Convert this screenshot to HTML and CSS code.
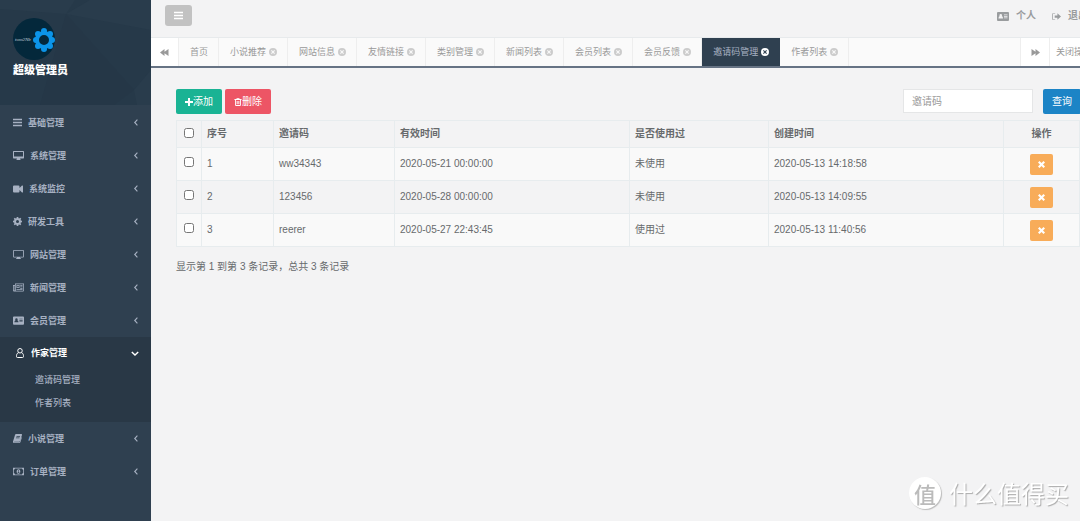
FILE: index.html
```html
<!DOCTYPE html>
<html lang="zh-CN">
<head>
<meta charset="utf-8">
<title>邀请码管理</title>
<link rel="stylesheet" href="styles.css">
</head>
<body>
<svg class="sprite" aria-hidden="true">
  <symbol id="bars" viewBox="0 0 12 12"><path d="M0 1h12v2H0zM0 5h12v2H0zM0 9h12v2H0z"/></symbol>
  <symbol id="left" viewBox="0 0 6 10"><path d="M5 1L1.2 5 5 9" fill="none" stroke="currentColor" stroke-width="1.6"/></symbol>
  <symbol id="down" viewBox="0 0 10 6"><path d="M1 1l4 3.8L9 1" fill="none" stroke="currentColor" stroke-width="1.8"/></symbol>
  <symbol id="desktop" viewBox="0 0 22 18"><path fill-rule="evenodd" d="M1 0h20l1 1v13l-1 1h-7l1 2v1H7v-1l1-2H1l-1-1V1zM2 2v9h18V2z"/></symbol>
  <symbol id="video" viewBox="0 0 20 14"><path d="M2 0h9q2 0 2 2v3l5-5h1q1 0 1 1v12q0 1-1 1h-1l-5-5v3q0 2-2 2H2q-2 0-2-2V2q0-2 2-2z"/></symbol>
  <symbol id="cog" viewBox="0 0 18 18"><path fill-rule="evenodd" d="M7.5 0h3l.5 2.4 1.4.6 2.1-1.4 2 2L15.100 5.700l.6 1.300 2.300.5v3l-2.300.5-.6 1.400 1.400 2-2 2.100-2.100-1.400-1.400.6-.5 2.300h-3L7 15.700l-1.400-.6-2 1.400-2.100-2.100 1.400-2L2.300 11 0 10.500v-3L2.300 7l.6-1.400-1.400-2 2.100-2.100 2 1.400L7 2.400zM9 6a3 3 0 1 0 0 6 3 3 0 0 0 0-6z"/></symbol>
  <symbol id="tv" viewBox="0 0 22 18"><path fill-rule="evenodd" d="M2 0h18q2 0 2 2v11q0 2-2 2h-6v1.500h2V18H6v-1.500h2V15H2q-2 0-2-2V2q0-2 2-2zM1.700 1.700v11.600h18.600V1.700z"/></symbol>
  <symbol id="news" viewBox="0 0 22 16"><path fill-rule="evenodd" d="M4 0h18v14q0 2-2 2H2q-2 0-2-2V3h4zM1.500 4.500V13q0 1 .8 1t.9-1V4.500zM5.500 1.500v12.900h14q1 0 1-1V1.500z"/><path fill-rule="evenodd" d="M7 3h6v6H7zm1.500 1.500v3h3v-3zM14.500 3h4.500v1.500h-4.500zm0 3h4.500v1.500h-4.500zm0 3h4.500v1.500h-4.500zM7 11h12v1.500H7z"/></symbol>
  <symbol id="card" viewBox="0 0 24 18"><path fill-rule="evenodd" d="M2 0h20q2 0 2 2v14q0 2-2 2H2q-2 0-2-2V2q0-2 2-2zm5.500 4a2.500 2.500 0 0 0-2 4.200Q3 9 3 13h9q0-4-2.500-4.800A2.500 2.500 0 0 0 7.500 4zM14 5v1.500h7V5zm0 3v1.500h7V8zm0 3v1.500h7V11z"/></symbol>
  <symbol id="user" viewBox="0 0 16 20"><path d="M5 9.500C1 10.500 1 15 1 17q0 2 2 2h10q2 0 2-2c0-2 0-6.500-4-7.500" fill="none" stroke="currentColor" stroke-width="2"/><circle cx="8" cy="5.500" r="4.500" fill="none" stroke="currentColor" stroke-width="2"/></symbol>
  <symbol id="book" viewBox="0 0 18 18"><path fill-rule="evenodd" d="M6 0h11q1.500.5 1 2l-4 12q-.5 1.500-2 1.500H3q-1.200 0-1 1h10.500q1 0 1.500-1.500l2.700-9 .8 1.500-2.500 8.500q-.7 2-2.500 2H2q-2.500-.5-2-3L4 2q.5-2 2-2zm1.200 4l-.4 1.300h7L14.200 4zm-1 3l-.4 1.300h7l.4-1.300z"/></symbol>
  <symbol id="money" viewBox="0 0 24 16"><path fill-rule="evenodd" d="M0 0h24v16H0zM4.500 1.700Q4 4 1.700 4.500v7Q4 12 4.500 14.300h15q.5-2.300 2.800-2.800v-7Q20 4 19.500 1.700z"/><path fill-rule="evenodd" d="M12 3c5.300 0 5.300 10 0 10S6.700 3 12 3zm-1.500 3l.6 1 .6-.4v2.900h-1.400V11h3.600V9.500h-1V5h-1z"/></symbol>
  <symbol id="back" viewBox="0 0 18 14"><path d="M9 0v5.500L17 0v14L9 8.500V14L0 7z"/></symbol>
  <symbol id="forward" viewBox="0 0 18 14"><path d="M9 0v5.500L1 0v14l8-5.500V14l9-7z"/></symbol>
  <symbol id="close" viewBox="0 0 16 16"><path fill-rule="evenodd" d="M8 0a8 8 0 1 0 0 16A8 8 0 0 0 8 0zM5.500 4L8 6.500 10.500 4 12 5.500 9.500 8l2.500 2.500-1.500 1.500L8 9.500 5.500 12 4 10.500 6.500 8 4 5.500z"/></symbol>
  <symbol id="exit" viewBox="0 0 20 16"><path d="M7 0v1.600H3.500Q1.600 1.600 1.600 3.500v9q0 1.900 1.900 1.900H7V16H3.500Q0 16 0 12.500v-9Q0 0 3.500 0zM12 1l8 7-8 7v-4.500H6v-5h6z"/></symbol>
  <symbol id="plus" viewBox="0 0 12 12"><path d="M4.500 0h3v4.500H12v3H7.500V12h-3V7.500H0v-3h4.500z"/></symbol>
  <symbol id="trash" viewBox="0 0 16 18"><path fill-rule="evenodd" d="M5.500 0h5l1.200 2.500H16v2h-1.500V16q0 2-2 2h-9q-2 0-2-2V4.500H0v-2h4.300zM6 2.500h4L9.500 1.500h-3zM3.500 4.500V16h9V4.500zM5 6.500h1.500v7.500H5zm2.300 0h1.500v7.500H7.300zm2.300 0H11v7.500H9.600z"/></symbol>
  <symbol id="times" viewBox="0 0 14 14"><path d="M3 0l4 4 4-4 3 3-4 4 4 4-3 3-4-4-4 4-3-3 4-4-4-4z"/></symbol>
</svg>
<div class="app">
  <aside class="sidebar">
    <header class="profile">
      <svg class="facets" viewBox="0 0 151 105" preserveAspectRatio="none" aria-hidden="true">
        <path class="facet-light" d="M0 0h75L66 14 0 9zM66 14L90 0h61v30z"/>
        <path class="facet-dark" d="M66 14l68 76-20 15H40z"/>
        <path class="facet-light" d="M134 90l17-20v35h-14z"/>
      </svg>
      <svg class="avatar" viewBox="0 0 42 42" role="img" aria-label="头像">
        <circle cx="21" cy="21" r="21" fill="#04283b"/>
        <text x="2" y="23" class="avatar-text">tom2Nb</text>
        <g fill="#0c94e8"><circle cx="31" cy="13" r="3"/><circle cx="37" cy="16" r="3"/><circle cx="39" cy="22" r="3"/><circle cx="37" cy="28" r="3"/><circle cx="31" cy="31" r="3"/><circle cx="25" cy="28" r="3"/><circle cx="23" cy="22" r="3"/><circle cx="25" cy="16" r="3"/></g>
        <circle cx="31" cy="22" r="7" fill="#04283b" stroke="#0c94e8" stroke-width="4"/>
      </svg>
      <strong class="profile-name">超级管理员</strong>
    </header>
    <nav class="menu">
      <a class="menu-item" href="#"><svg class="i9"><use href="#bars"/></svg><span>基础管理</span><svg class="arrow"><use href="#left"/></svg></a>
      <a class="menu-item" href="#"><svg class="i11"><use href="#desktop"/></svg><span>系统管理</span><svg class="arrow"><use href="#left"/></svg></a>
      <a class="menu-item" href="#"><svg class="i10"><use href="#video"/></svg><span>系统监控</span><svg class="arrow"><use href="#left"/></svg></a>
      <a class="menu-item" href="#"><svg class="i9"><use href="#cog"/></svg><span>研发工具</span><svg class="arrow"><use href="#left"/></svg></a>
      <a class="menu-item" href="#"><svg class="i11"><use href="#tv"/></svg><span>网站管理</span><svg class="arrow"><use href="#left"/></svg></a>
      <a class="menu-item" href="#"><svg class="i11"><use href="#news"/></svg><span>新闻管理</span><svg class="arrow"><use href="#left"/></svg></a>
      <a class="menu-item" href="#"><svg class="i11"><use href="#card"/></svg><span>会员管理</span><svg class="arrow"><use href="#left"/></svg></a>
      <div class="menu-group">
        <a class="menu-item open" href="#"><svg class="i10 tall"><use href="#user"/></svg><span>作家管理</span><svg class="arrow-down"><use href="#down"/></svg></a>
        <a class="sub-item" href="#">邀请码管理</a>
        <a class="sub-item" href="#">作者列表</a>
      </div>
      <a class="menu-item" href="#"><svg class="i9"><use href="#book"/></svg><span>小说管理</span><svg class="arrow"><use href="#left"/></svg></a>
      <a class="menu-item" href="#"><svg class="i11"><use href="#money"/></svg><span>订单管理</span><svg class="arrow"><use href="#left"/></svg></a>
    </nav>
  </aside>
  <main class="main">
    <header class="topbar">
      <button class="toggle" type="button" aria-label="收起菜单"><svg class="i9"><use href="#bars"/></svg></button>
      <nav class="top-links">
        <a href="#"><svg class="i12"><use href="#card"/></svg>个人</a>
        <a href="#"><svg class="i9"><use href="#exit"/></svg>退出</a>
      </nav>
    </header>
    <div class="tabbar">
      <button class="tab-scroll" type="button" aria-label="向左"><svg class="i9"><use href="#back"/></svg></button>
      <nav class="tabs">
        <a class="tab" href="#">首页</a>
        <a class="tab" href="#">小说推荐<svg class="i8"><use href="#close"/></svg></a>
        <a class="tab" href="#">网站信息<svg class="i8"><use href="#close"/></svg></a>
        <a class="tab" href="#">友情链接<svg class="i8"><use href="#close"/></svg></a>
        <a class="tab" href="#">类别管理<svg class="i8"><use href="#close"/></svg></a>
        <a class="tab" href="#">新闻列表<svg class="i8"><use href="#close"/></svg></a>
        <a class="tab" href="#">会员列表<svg class="i8"><use href="#close"/></svg></a>
        <a class="tab" href="#">会员反馈<svg class="i8"><use href="#close"/></svg></a>
        <a class="tab active" href="#">邀请码管理<svg class="i8"><use href="#close"/></svg></a>
        <a class="tab" href="#">作者列表<svg class="i8"><use href="#close"/></svg></a>
      </nav>
      <button class="tab-scroll next" type="button" aria-label="向右"><svg class="i9"><use href="#forward"/></svg></button>
      <button class="tab-close" type="button">关闭操作</button>
    </div>
    <section class="content">
      <div class="toolbar">
        <button class="btn add" type="button"><svg class="i8"><use href="#plus"/></svg>添加</button>
        <button class="btn delete" type="button"><svg class="i8"><use href="#trash"/></svg>删除</button>
        <form class="search">
          <input class="search-input" type="text" placeholder="邀请码" aria-label="邀请码">
          <button class="btn query" type="button">查询</button>
        </form>
      </div>
      <table class="grid">
        <colgroup><col class="c-check"><col class="c-no"><col class="c-code"><col class="c-time"><col class="c-used"><col class="c-time"><col class="c-op"></colgroup>
        <thead>
          <tr><th class="check"><input type="checkbox" aria-label="全选"></th><th>序号</th><th>邀请码</th><th>有效时间</th><th>是否使用过</th><th>创建时间</th><th class="op">操作</th></tr>
        </thead>
        <tbody>
          <tr><td class="check"><input type="checkbox" aria-label="选择 1"></td><td>1</td><td>ww34343</td><td>2020-05-21 00:00:00</td><td>未使用</td><td>2020-05-13 14:18:58</td><td class="op"><button class="remove" type="button" aria-label="删除 1"><svg class="i7"><use href="#times"/></svg></button></td></tr>
          <tr><td class="check"><input type="checkbox" aria-label="选择 2"></td><td>2</td><td>123456</td><td>2020-05-28 00:00:00</td><td>未使用</td><td>2020-05-13 14:09:55</td><td class="op"><button class="remove" type="button" aria-label="删除 2"><svg class="i7"><use href="#times"/></svg></button></td></tr>
          <tr><td class="check"><input type="checkbox" aria-label="选择 3"></td><td>3</td><td>reerer</td><td>2020-05-27 22:43:45</td><td>使用过</td><td>2020-05-13 11:40:56</td><td class="op"><button class="remove" type="button" aria-label="删除 3"><svg class="i7"><use href="#times"/></svg></button></td></tr>
        </tbody>
      </table>
      <p class="summary">显示第 1 到第 3 条记录，总共 3 条记录</p>
    </section>
  </main>
</div>
<div class="watermark"><span class="seal">值</span><span>什么值得买</span></div>
</body>
</html>
```

FILE: styles.css
```css
* { box-sizing: border-box; }
body {
  margin: 0;
  background: #f3f3f4;
  color: #676a6c;
  font: 10px/14px "Liberation Sans", "Noto Sans CJK SC", sans-serif;
}
a { color: inherit; text-decoration: none; }
button, input { font: inherit; margin: 0; }
button { border: 0; padding: 0; cursor: pointer; }
svg { fill: currentColor; flex: none; }
.sprite { position: absolute; width: 0; height: 0; }
.i7 { width: 7px; height: 7px; }
.i8 { width: 8px; height: 8px; }
.i9 { width: 9px; height: 9px; }
.i10 { width: 10px; height: 8px; }
.i10.tall { height: 10px; }
.i11 { width: 11px; height: 9px; }
.i12 { width: 12px; height: 9px; }

.app { display: flex; min-height: 100vh; overflow: hidden; }

/* sidebar */
.sidebar { width: 151px; flex: none; background: #2f4050; color: #a7b1c2; font-size: 9px; font-weight: bold; }
.profile {
  position: relative;
  display: flex;
  flex-direction: column;
  align-items: flex-start;
  padding: 18px 13px 27px;
  background: #263949;
}
.facets { position: absolute; inset: 0; width: 100%; height: 100%; }
.facet-light { fill: #293c4c; }
.facet-dark { fill: #253747; }
.avatar { position: relative; width: 42px; height: 42px; }
.avatar-text { font: italic 5px "Liberation Serif", serif; fill: #c5d3dc; }
.profile-name { position: relative; margin-top: 2px; color: #fff; font-size: 11px; line-height: 16px; }
.menu { padding-top: 1px; }
.menu-item { display: flex; align-items: center; gap: 6px; height: 33px; padding: 0 12px 0 13px; }
.menu-item span { flex: 1; }
.arrow { width: 6px; height: 7px; }
.arrow-down { width: 8px; height: 5px; }
.menu-group { background: #293846; padding-bottom: 7px; }
.menu-item.open { color: #fff; padding-left: 15px; height: 32px; }
.sub-item { display: block; padding-left: 35px; line-height: 23px; font-weight: 500; }

/* header */
.main { flex: 1; min-width: 0; }
.topbar { display: flex; align-items: flex-start; justify-content: space-between; height: 38px; padding: 5px 0 0 14px; margin-right: -8px; border-bottom: 1px solid #e7eaec; }
.toggle { display: flex; align-items: center; justify-content: center; width: 27px; height: 21px; border-radius: 3px; background: #c2c2c2; color: #fff; }
.top-links { display: flex; gap: 16px; padding-top: 4px; color: #999c9e; font-weight: bold; }
.top-links a { display: flex; align-items: center; gap: 7px; }
.tabbar { display: flex; height: 30px; margin-right: -18px; border-bottom: 2px solid #667384; background: #fafafa; color: #999; font-size: 9px; }
.tab-scroll { display: flex; align-items: center; justify-content: center; width: 28px; background: #fff; color: #999; border-right: 1px solid #eee; }
.tab-scroll.next { width: 30px; border-left: 1px solid #eee; }
.tabs { display: flex; flex: 1; min-width: 0; }
.tab { display: flex; align-items: center; gap: 3px; padding: 0 10px 0 11px; border-right: 1px solid #eee; white-space: nowrap; }
.tab svg { color: #ccc; }
.tab.active { background: #2f4050; color: #a7b1c2; border-color: #2f4050; }
.tab.active svg { color: #fff; }
.tab-close { width: 48px; background: #fff; color: #999; white-space: nowrap; }

/* content */
.content { padding: 21px 0 0 25px; }
.toolbar { display: flex; gap: 3px; align-items: center; }
.btn { display: flex; align-items: center; justify-content: center; width: 46px; height: 25px; border-radius: 2px; color: #fff; }
.add { background: #1ab394; }
.delete { background: #ed5565; }
.query { width: 38px; background: #1c84c6; }
.search { display: flex; gap: 10px; margin-left: auto; margin-right: -1px; }
.search-input { width: 130px; height: 24px; padding: 0 8px; border: 1px solid #e5e6e7; background: #fff; color: #676a6c; }
.search-input::placeholder { color: #999; opacity: 1; }
.grid { width: 100%; margin-top: 6px; table-layout: fixed; border-collapse: collapse; }
.grid th, .grid td { height: 33px; padding: 0 5px; border: 1px solid #e7ecee; text-align: left; }
.grid th { height: 27px; }
.grid tbody tr:nth-child(odd) { background: #f9f9f9; }
.grid .check { padding: 0 0 2px; text-align: center; }
.grid td.check { padding-bottom: 4px; }
.grid .op { text-align: center; }
.c-check { width: 25px; }
.c-no { width: 72px; }
.c-code { width: 121px; }
.c-time { width: 235px; }
.c-used { width: 139px; }
.c-op { width: 76px; }
.check input { display: block; width: 10px; height: 10px; margin: 0 auto; }
.remove { display: flex; align-items: center; justify-content: center; width: 23px; height: 21px; margin: 0 auto; border-radius: 2px; background: #f8ac59; color: #fff; }
.summary { margin: 13px 0 0; }

.watermark {
  position: fixed;
  right: 11px;
  bottom: 10px;
  display: flex;
  align-items: center;
  gap: 8px;
  color: #fff;
  font: 24px/36px "Noto Sans CJK SC", sans-serif;
  text-shadow: 1px 1px 1px #aaa;
  pointer-events: none;
}
.seal { width: 32px; height: 32px; border-radius: 50%; background: #fff; box-shadow: 1px 1px 1px #bbb; color: #bbb; font-size: 22px; font-weight: 500; line-height: 32px; text-align: center; text-shadow: none; }
```
